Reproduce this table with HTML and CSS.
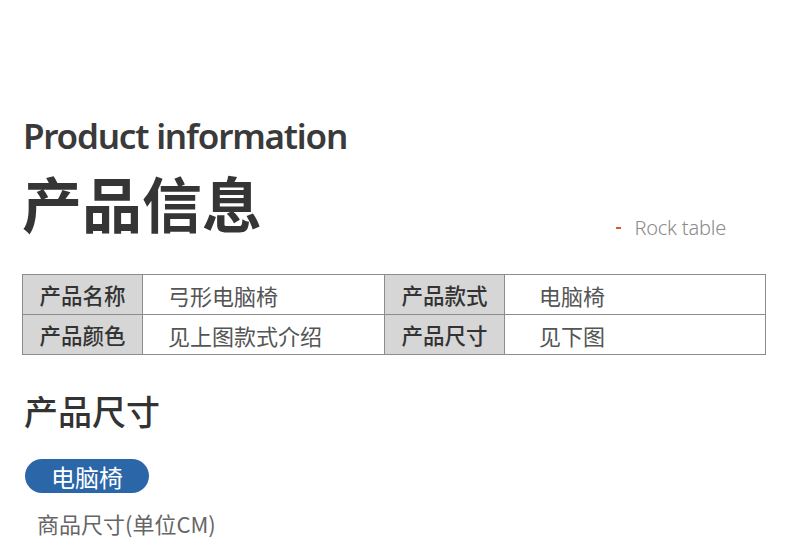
FILE: index.html
```html
<!DOCTYPE html>
<html lang="zh">
<head>
<meta charset="utf-8">
<link rel="stylesheet" href="styles.css">
</head>
<body>
<div class="page">
  <div class="title-en">Product information</div>
  <div class="title-row">
    <div class="title-cn">产品信息</div>
    <div class="tag"><span class="dash"></span><span class="tag-text">Rock table</span></div>
  </div>
  <div class="spec-table">
    <div class="cell label">产品名称</div>
    <div class="cell value">弓形电脑椅</div>
    <div class="cell label">产品款式</div>
    <div class="cell value value-right">电脑椅</div>
    <div class="cell label">产品颜色</div>
    <div class="cell value">见上图款式介绍</div>
    <div class="cell label">产品尺寸</div>
    <div class="cell value value-right">见下图</div>
  </div>
  <div class="section-title">产品尺寸</div>
  <div class="pill">电脑椅</div>
  <div class="unit">商品尺寸(单位CM)</div>
</div>
</body>
</html>
```
FILE: styles.css
```css
html, body {
  margin: 0;
  padding: 0;
  background: #ffffff;
}
body {
  width: 790px;
  height: 558px;
  overflow: hidden;
  font-family: "Noto Sans", "Noto Sans CJK SC", sans-serif;
  color: #333;
}
.page {
  padding: 112px 24px 0 22px;
}
.title-en {
  font-family: "Noto Sans", sans-serif;
  font-weight: 600;
  font-size: 35px;
  line-height: 48px;
  letter-spacing: -1.2px;
  color: #3a3a3a;
  margin-left: 1px;
}
.title-row {
  display: flex;
  justify-content: space-between;
  align-items: flex-end;
}
.title-cn {
  margin-top: 6px;
  font-family: "Noto Sans CJK SC", sans-serif;
  font-weight: 700;
  font-size: 60px;
  line-height: 72px;
  color: #353535;
  letter-spacing: 0;
}
.tag {
  display: flex;
  align-items: center;
  margin-right: 40px;
  margin-bottom: -4px;
}
.dash {
  width: 5px;
  height: 2px;
  background: #e0552a;
  margin-right: 13px;
}
.tag-text {
  font-family: "Noto Sans", sans-serif;
  font-weight: 300;
  font-size: 20px;
  letter-spacing: -0.2px;
  color: #8a8a8a;
  line-height: 28px;
}
.spec-table {
  margin-top: 36px;
  width: 744px;
  display: grid;
  grid-template-columns: 120px 242px 120px 1fr;
  border: 1px solid #8c8c8c;
  border-right: none;
  border-bottom: none;
  box-sizing: border-box;
}
.cell {
  height: 40px;
  box-sizing: border-box;
  border-right: 1px solid #8c8c8c;
  border-bottom: 1px solid #8c8c8c;
  display: flex;
  align-items: center;
  font-family: "Noto Sans CJK SC", sans-serif;
  font-size: 21.5px;
}
.label {
  background: #d6d6d6;
  color: #333;
  justify-content: center;
  font-weight: 500;
}
.value {
  color: #555;
  padding-left: 25px;
  font-weight: 400;
  font-size: 22px;
}
.value-right {
  padding-left: 34px;
}
.section-title {
  margin-top: 36px;
  margin-left: 2px;
  font-family: "Noto Sans CJK SC", sans-serif;
  font-size: 34px;
  line-height: 40px;
  color: #333;
  font-weight: 500;
}
.pill {
  margin-top: 28px;
  margin-left: 3px;
  width: 124px;
  height: 34px;
  border-radius: 17px;
  background: #2b66a9;
  color: #fff;
  font-family: "Noto Sans CJK SC", sans-serif;
  font-size: 24px;
  display: flex;
  align-items: center;
  justify-content: center;
}
.unit {
  margin-top: 16px;
  margin-left: 15px;
  font-family: "Noto Sans CJK SC", sans-serif;
  font-size: 22px;
  line-height: 28px;
  color: #666;
}
```
